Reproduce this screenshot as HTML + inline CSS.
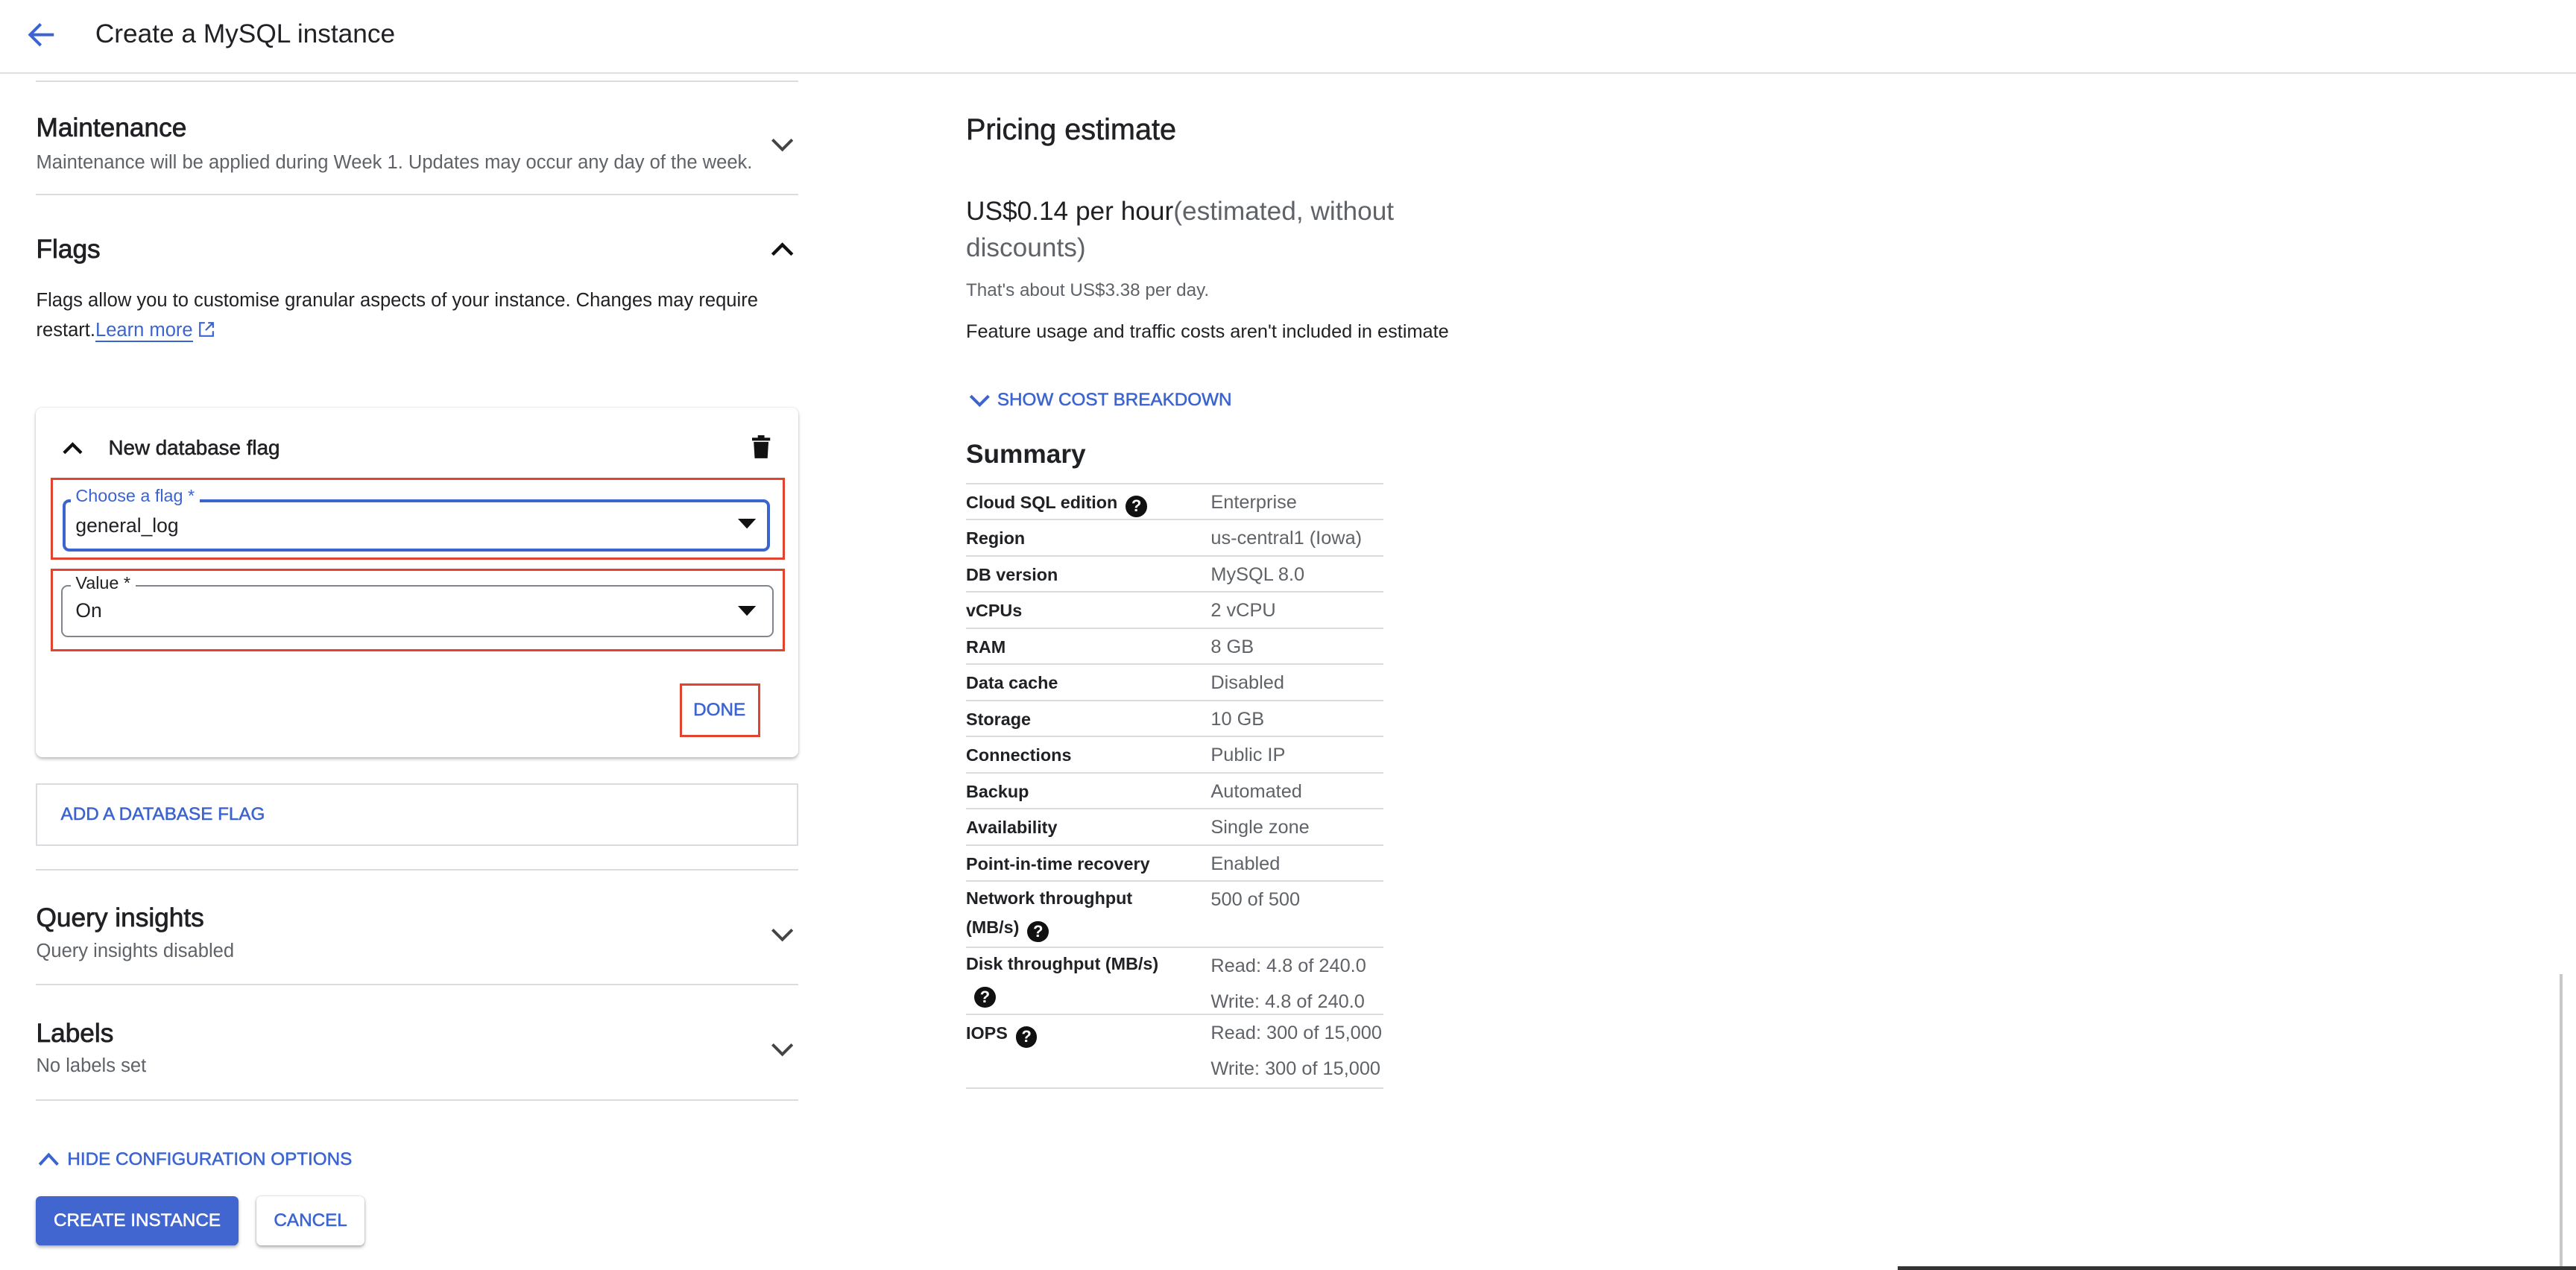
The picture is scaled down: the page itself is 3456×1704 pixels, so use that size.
<!DOCTYPE html>
<html><head><meta charset="utf-8"><style>
html,body{margin:0;padding:0;background:#fff;overflow:hidden}
body{width:3456px;height:1704px}
#r{position:absolute;left:0;top:0;width:1568px;height:773px;zoom:2.20408;font-family:"Liberation Sans",Arial,sans-serif;color:#202124}
.a{position:absolute;white-space:nowrap}
.ln{position:absolute;height:1px;background:#dadce0}
.t{font-size:16px;color:#202124;line-height:18px;-webkit-text-stroke:0.35px #202124}
.s{font-size:11.6px;color:#5f6368;line-height:14px}
.blue{color:#3c64d0}
.chev{position:absolute;width:16px;height:10px}
.row{position:absolute;left:588px;width:254px;border-top:1px solid #dadce0;font-size:11.5px;line-height:22px}
.row .k{position:absolute;left:0;top:0;color:#202124;font-weight:bold;font-size:10.6px}
.row .v{position:absolute;left:149px;top:0;color:#5f6368}
.q{display:inline-block;width:13px;height:13px;border-radius:50%;background:#111;color:#fff;font-size:10px;line-height:13px;text-align:center;font-weight:bold;vertical-align:-2px;margin-left:5px}
.red{position:absolute;border:1.5px solid #e0442f}
.md{-webkit-text-stroke:0.25px currentColor}
</style></head><body><div id="r">
<svg class="a" style="left:17px;top:13px" width="17" height="16" viewBox="0 0 17 16"><path d="M16 8H2M8 1.5L1.5 8 8 14.5" stroke="#3c64d0" stroke-width="1.8" fill="none"/></svg>
<div class="a" style="left:58px;top:12px;font-size:16px;line-height:18px">Create a MySQL instance</div>
<div class="ln" style="left:0;top:44px;width:1568px;background:#e0e0e0"></div>

<div class="ln" style="left:22px;top:49px;width:464px"></div>
<div class="a t" style="left:22px;top:69px">Maintenance</div>
<div class="a s" style="left:22px;top:92px">Maintenance will be applied during Week 1. Updates may occur any day of the week.</div>
<svg class="chev" style="left:468px;top:83px" viewBox="0 0 16 10"><path d="M2 2l6 6 6-6" stroke="#444" stroke-width="1.8" fill="none"/></svg>
<div class="ln" style="left:22px;top:118px;width:464px"></div>

<div class="a t" style="left:22px;top:143px">Flags</div>
<svg class="chev" style="left:468px;top:147px" viewBox="0 0 16 10"><path d="M2 8l6-6 6 6" stroke="#111" stroke-width="2" fill="none"/></svg>
<div class="a" style="left:22px;top:176px;font-size:11.6px;line-height:14px">Flags allow you to customise granular aspects of your instance. Changes may require</div>
<div class="a" style="left:22px;top:194px;font-size:11.6px;line-height:14px">restart.<span class="blue" style="border-bottom:1px solid #3c64d0">Learn more</span> <svg width="10" height="10" viewBox="0 0 10 10" style="vertical-align:-1px"><path d="M4 1H1v8h8V6M6 1h3v3M9 1L4.5 5.5" stroke="#3c64d0" stroke-width="1" fill="none"/></svg></div>

<div class="a" style="left:22px;top:248px;width:464px;height:213px;background:#fff;border-radius:4px;box-shadow:0 1px 2px rgba(0,0,0,.25),0 0 1px rgba(0,0,0,.1)"></div>
<svg class="chev" style="left:37px;top:268px;width:14px" viewBox="0 0 16 10"><path d="M2 8l6-6 6 6" stroke="#111" stroke-width="2.2" fill="none"/></svg>
<div class="a md" style="left:66px;top:265px;font-size:12.6px;line-height:15px">New database flag</div>
<svg class="a" style="left:458px;top:265px" width="11" height="14" viewBox="0 0 11 14"><rect x="0" y="1.5" width="11" height="1.8" fill="#111"/><rect x="3.5" y="0" width="4" height="2" fill="#111"/><path d="M1 4h9l-.6 10H1.6z" fill="#111"/></svg>

<div class="red" style="left:31px;top:291px;width:444px;height:47px"></div>
<div class="a" style="left:38px;top:304px;width:427px;height:28px;border:2px solid #3c64d0;border-radius:4px"></div>
<div class="a blue" style="left:43px;top:296px;font-size:10.6px;line-height:12px;background:#fff;padding:0 3px">Choose a flag *</div>
<div class="a" style="left:46px;top:313px;font-size:12px;line-height:14px">general_log</div>
<svg class="a" style="left:449px;top:316px" width="11" height="6" viewBox="0 0 11 6"><path d="M0 0h11L5.5 6z" fill="#111"/></svg>

<div class="red" style="left:31px;top:346px;width:444px;height:48px"></div>
<div class="a" style="left:37px;top:356px;width:432px;height:30px;border:1px solid #80868b;border-radius:4px"></div>
<div class="a" style="left:43px;top:349px;font-size:10.6px;line-height:12px;background:#fff;padding:0 3px">Value *</div>
<div class="a" style="left:46px;top:365px;font-size:12px;line-height:14px">On</div>
<svg class="a" style="left:449px;top:369px" width="11" height="6" viewBox="0 0 11 6"><path d="M0 0h11L5.5 6z" fill="#111"/></svg>

<div class="red" style="left:414px;top:416px;width:46px;height:30px"></div>
<div class="a blue md" style="left:422px;top:426px;font-size:11px;line-height:13px">DONE</div>

<div class="a" style="left:22px;top:477px;width:462px;height:36px;border:1px solid #dadce0"></div>
<div class="a blue md" style="left:37px;top:489px;font-size:11px;line-height:14px">ADD A DATABASE FLAG</div>

<div class="ln" style="left:22px;top:529px;width:464px"></div>
<div class="a t" style="left:22px;top:550px">Query insights</div>
<div class="a s" style="left:22px;top:572px">Query insights disabled</div>
<svg class="chev" style="left:468px;top:564px" viewBox="0 0 16 10"><path d="M2 2l6 6 6-6" stroke="#444" stroke-width="1.8" fill="none"/></svg>
<div class="ln" style="left:22px;top:599px;width:464px"></div>
<div class="a t" style="left:22px;top:620px">Labels</div>
<div class="a s" style="left:22px;top:642px">No labels set</div>
<svg class="chev" style="left:468px;top:634px" viewBox="0 0 16 10"><path d="M2 2l6 6 6-6" stroke="#444" stroke-width="1.8" fill="none"/></svg>
<div class="ln" style="left:22px;top:669px;width:464px"></div>

<svg class="a" style="left:23px;top:701px" width="13" height="9" viewBox="0 0 13 9"><path d="M1 8l5.5-6 5.5 6" stroke="#3c64d0" stroke-width="1.8" fill="none"/></svg>
<div class="a blue md" style="left:41px;top:699px;font-size:11px;line-height:14px">HIDE CONFIGURATION OPTIONS</div>

<div class="a md" style="left:22px;top:728px;width:123px;height:30px;background:#4266d0;border-radius:3px;box-shadow:0 1px 2px rgba(0,0,0,.3);color:#fff;font-size:11px;line-height:30px;text-align:center">CREATE INSTANCE</div>
<div class="a blue md" style="left:156px;top:728px;width:66px;height:30px;background:#fff;border-radius:3px;box-shadow:0 1px 2px rgba(0,0,0,.3),0 0 1px rgba(0,0,0,.2);font-size:11px;line-height:30px;text-align:center">CANCEL</div>

<div class="a md" style="left:588px;top:69px;font-size:18px;line-height:20px">Pricing estimate</div>
<div class="a" style="left:588px;top:119px;font-size:16px;line-height:20px">US$0.14 per hour<span style="color:#5f6368">(estimated, without</span></div>
<div class="a" style="left:588px;top:141px;font-size:16px;line-height:20px;color:#5f6368">discounts)</div>
<div class="a" style="left:588px;top:170px;font-size:11px;line-height:14px;color:#5f6368">That's about US$3.38 per day.</div>
<div class="a" style="left:588px;top:195px;font-size:11.5px;line-height:14px">Feature usage and traffic costs aren't included in estimate</div>
<svg class="a" style="left:590px;top:240px" width="13" height="8" viewBox="0 0 13 8"><path d="M1 1l5.5 5.5L12 1" stroke="#3c64d0" stroke-width="1.8" fill="none"/></svg>
<div class="a blue md" style="left:607px;top:237px;font-size:11px;line-height:14px">SHOW COST BREAKDOWN</div>
<div class="a" style="left:588px;top:267px;font-size:16px;line-height:20px;font-weight:bold">Summary</div>

<div class="row" style="top:294px;height:22px"><div class="k">Cloud SQL edition<span class="q">?</span></div><div class="v">Enterprise</div></div>
<div class="row" style="top:316px;height:22px"><div class="k">Region</div><div class="v">us-central1 (Iowa)</div></div>
<div class="row" style="top:338px;height:22px"><div class="k">DB version</div><div class="v">MySQL 8.0</div></div>
<div class="row" style="top:360px;height:22px"><div class="k">vCPUs</div><div class="v">2 vCPU</div></div>
<div class="row" style="top:382px;height:22px"><div class="k">RAM</div><div class="v">8 GB</div></div>
<div class="row" style="top:404px;height:22px"><div class="k">Data cache</div><div class="v">Disabled</div></div>
<div class="row" style="top:426px;height:22px"><div class="k">Storage</div><div class="v">10 GB</div></div>
<div class="row" style="top:448px;height:22px"><div class="k">Connections</div><div class="v">Public IP</div></div>
<div class="row" style="top:470px;height:22px"><div class="k">Backup</div><div class="v">Automated</div></div>
<div class="row" style="top:492px;height:22px"><div class="k">Availability</div><div class="v">Single zone</div></div>
<div class="row" style="top:514px;height:22px"><div class="k">Point-in-time recovery</div><div class="v">Enabled</div></div>
<div class="row" style="top:536px;height:40px"><div class="k" style="line-height:18px;top:1px">Network throughput<br>(MB/s)<span class="q">?</span></div><div class="v">500 of 500</div></div>
<div class="row" style="top:576px;height:41px"><div class="k" style="line-height:18px;top:1px">Disk throughput (MB/s)<br><span class="q">?</span></div><div class="v">Read: 4.8 of 240.0<br>Write: 4.8 of 240.0</div></div>
<div class="row" style="top:617px;height:44px;border-bottom:1px solid #dadce0"><div class="k">IOPS<span class="q">?</span></div><div class="v">Read: 300 of 15,000<br>Write: 300 of 15,000</div></div>

<div class="a" style="left:1558px;top:593px;width:2px;height:178px;background:#c8c8c8"></div>
<div class="a" style="left:1155px;top:771px;width:413px;height:2px;background:#333"></div>
</div></body></html>
